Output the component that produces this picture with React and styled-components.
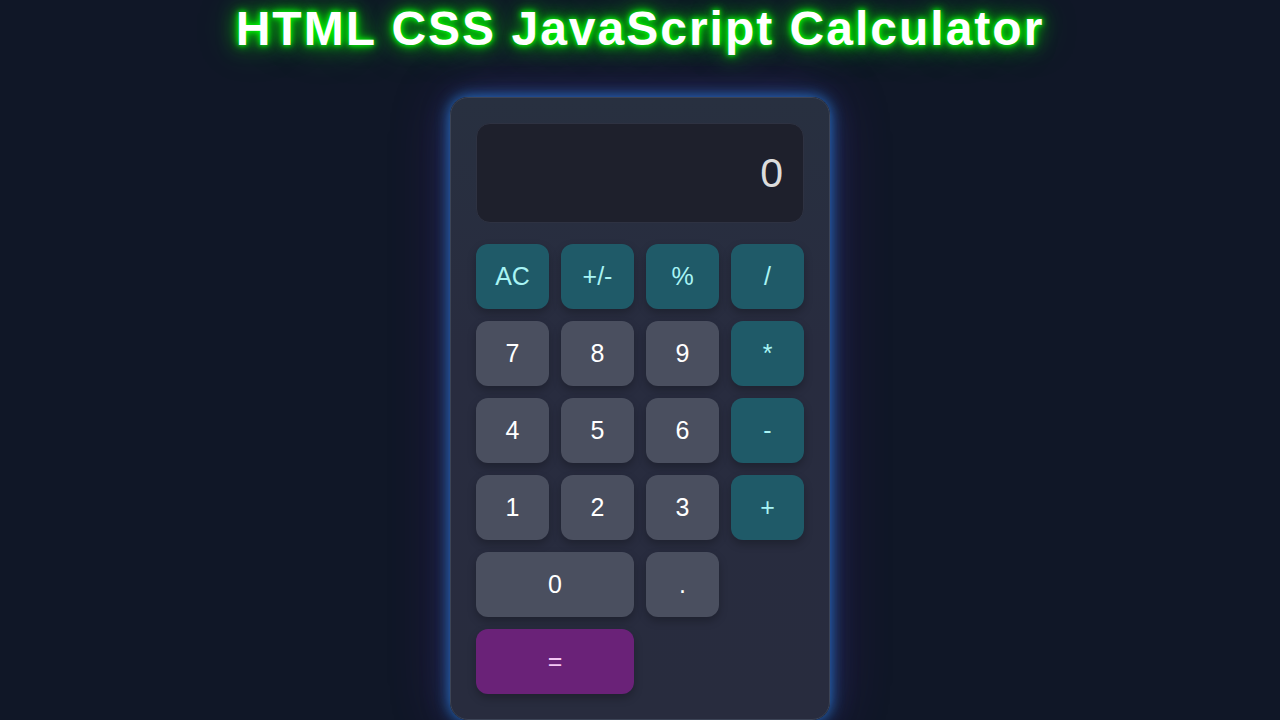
import React, { useState } from 'react'
import styled, { createGlobalStyle } from 'styled-components'

const GlobalStyle = createGlobalStyle`
  html, body {
    margin: 0;
    padding: 0;
    background: #101727;
    height: 100%;
  }
  body {
    font-family: "Liberation Sans", Arial, sans-serif;
    overflow: hidden;
  }
`

const Page = styled.div`
  min-height: 720px;
  display: flex;
  flex-direction: column;
  align-items: center;
`

const Title = styled.h1`
  margin: 0;
  height: 97px;
  font-family: "Liberation Sans", Arial, sans-serif;
  font-size: 48px;
  font-weight: 700;
  letter-spacing: 2px;
  line-height: 57px;
  color: #ffffff;
  text-shadow: 0 0 5px #00ff00, 0 0 10px #00ff00, 0 0 20px #00cc00, 0 0 40px rgba(0, 255, 0, 0.4);
`

const Calculator = styled.div`
  width: 328px;
  padding: 25px;
  background: linear-gradient(180deg, #283040 0%, #282c3f 40%, #282c3e 100%);
  border: 1px solid #3c4456;
  border-radius: 18px;
  box-shadow: 0 0 14px rgba(40, 140, 240, 0.75), 0 0 30px rgba(40, 120, 220, 0.3), 0 0 60px rgba(110, 40, 170, 0.3);
`

const Display = styled.div`
  height: 100px;
  box-sizing: border-box;
  background: #1e202c;
  border: 1px solid #2e3242;
  border-radius: 14px;
  display: flex;
  align-items: center;
  justify-content: flex-end;
  padding: 0 20px;
  font-size: 41px;
  color: #dcdcdc;
  margin-bottom: 21px;
`

const Keys = styled.div`
  display: grid;
  grid-template-columns: repeat(4, 73px);
  grid-auto-rows: 65px;
  gap: 12px;
`

const tones = {
  num: { bg: '#4a4f5f', fg: '#ffffff' },
  op: { bg: '#1f5a68', fg: '#a8f4f4' },
  eq: { bg: '#6a2278', fg: '#f4c6f4' },
}

const Key = styled.button`
  grid-column: span ${(p) => p.$span || 1};
  border: none;
  border-radius: 12px;
  background: ${(p) => tones[p.$tone].bg};
  color: ${(p) => tones[p.$tone].fg};
  font-family: "Liberation Sans", Arial, sans-serif;
  font-size: 25px;
  box-shadow: 0 4px 8px rgba(0, 0, 0, 0.25);
  cursor: pointer;
`

const keys = [
  ['AC', 'op'], ['+/-', 'op'], ['%', 'op'], ['/', 'op'],
  ['7', 'num'], ['8', 'num'], ['9', 'num'], ['*', 'op'],
  ['4', 'num'], ['5', 'num'], ['6', 'num'], ['-', 'op'],
  ['1', 'num'], ['2', 'num'], ['3', 'num'], ['+', 'op'],
  ['0', 'num', 2], ['.', 'num'],
  ['=', 'eq', 2],
]

export default function App() {
  const [value] = useState('0')
  return (
    <>
      <GlobalStyle />
      <Page>
        <Title>HTML CSS JavaScript Calculator</Title>
        <Calculator>
          <Display>{value}</Display>
          <Keys>
            {keys.map(([label, tone, span]) => (
              <Key key={label} $tone={tone} $span={span}>{label}</Key>
            ))}
          </Keys>
        </Calculator>
      </Page>
    </>
  )
}
